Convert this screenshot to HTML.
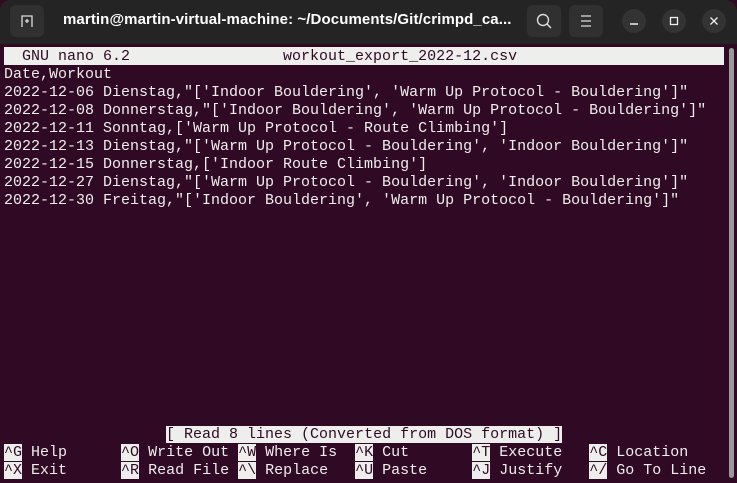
<!DOCTYPE html>
<html><head><style>
body{margin:0;width:737px;height:483px;overflow:hidden;background:#300a24;position:relative;font-family:"Liberation Mono",monospace;}
#tb{position:absolute;left:0;top:0;width:737px;height:44px;background:#242424;border-top-right-radius:12px;border-top-left-radius:10px;}
.btn{position:absolute;top:5px;width:34px;height:32px;background:#303030;border-radius:6px;}
.c{position:absolute;top:9px;width:24px;height:24px;border-radius:50%;background:#333;}
#title{position:absolute;left:63px;top:11px;color:#fff;font:bold 15px "Liberation Sans",sans-serif;letter-spacing:0.1px;}
.r{position:absolute;left:4px;height:18px;line-height:19px;font-size:15px;color:#eeeeec;white-space:pre;}
.inv{background:#eeeeec;color:#300a24;}
#sb{position:absolute;left:729px;top:48px;width:5px;height:430px;background:#9a9a9a;border-radius:3px;}
</style></head><body>
<div id="tb">
 <div class="btn" style="left:10px"><svg width="34" height="32"><path d="M12 22V11h10v11M15 16h4M17 14v4" stroke="#ddd" stroke-width="1.3" fill="none"/></svg></div>
 <div id="title">martin@martin-virtual-machine: ~/Documents/Git/crimpd_ca...</div>
 <div class="btn" style="left:527px"><svg width="34" height="32"><circle cx="16" cy="15" r="5.5" stroke="#ddd" stroke-width="1.4" fill="none"/><path d="M20 19l4 4" stroke="#ddd" stroke-width="1.5"/></svg></div>
 <div class="btn" style="left:569px"><svg width="34" height="32"><path d="M12 11h10M12 16h10M12 21h10" stroke="#ddd" stroke-width="1.3"/></svg></div>
 <div class="c" style="left:622px"><svg width="24" height="24"><path d="M8 15h8" stroke="#eee" stroke-width="1.5"/></svg></div>
 <div class="c" style="left:662px"><svg width="24" height="24"><rect x="8.5" y="8.5" width="7" height="7" stroke="#eee" stroke-width="1.3" fill="none"/></svg></div>
 <div class="c" style="left:702px"><svg width="24" height="24"><path d="M8.5 8.5l7 7M15.5 8.5l-7 7" stroke="#eee" stroke-width="1.3"/></svg></div>
</div>
<div class="r inv" style="top:47px;width:720px">  GNU nano 6.2                 workout_export_2022-12.csv</div>
<div class="r" style="top:65px">Date,Workout</div>
<div class="r" style="top:83px">2022-12-06 Dienstag,"['Indoor Bouldering', 'Warm Up Protocol - Bouldering']"</div>
<div class="r" style="top:101px">2022-12-08 Donnerstag,"['Indoor Bouldering', 'Warm Up Protocol - Bouldering']"</div>
<div class="r" style="top:119px">2022-12-11 Sonntag,['Warm Up Protocol - Route Climbing']</div>
<div class="r" style="top:137px">2022-12-13 Dienstag,"['Warm Up Protocol - Bouldering', 'Indoor Bouldering']"</div>
<div class="r" style="top:155px">2022-12-15 Donnerstag,['Indoor Route Climbing']</div>
<div class="r" style="top:173px">2022-12-27 Dienstag,"['Warm Up Protocol - Bouldering', 'Indoor Bouldering']"</div>
<div class="r" style="top:191px">2022-12-30 Freitag,"['Indoor Bouldering', 'Warm Up Protocol - Bouldering']"</div>
<div class="r" style="top:425px">                  <span class="inv">[ Read 8 lines (Converted from DOS format) ]</span></div>
<div class="r" style="top:443px"><span class="inv">^G</span> Help      <span class="inv">^O</span> Write Out <span class="inv">^W</span> Where Is  <span class="inv">^K</span> Cut       <span class="inv">^T</span> Execute   <span class="inv">^C</span> Location</div>
<div class="r" style="top:461px"><span class="inv">^X</span> Exit      <span class="inv">^R</span> Read File <span class="inv">^\</span> Replace   <span class="inv">^U</span> Paste     <span class="inv">^J</span> Justify   <span class="inv">^/</span> Go To Line</div>
<div id="sb"></div>
</body></html>
